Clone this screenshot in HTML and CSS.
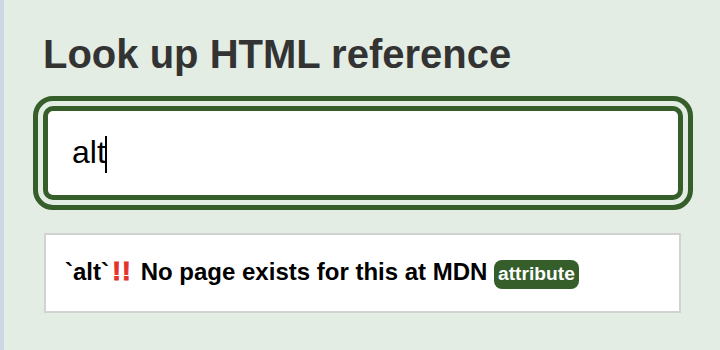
FILE: index.html
```html
<!DOCTYPE html>
<html lang="en">
<head>
<meta charset="utf-8">
<title>Look up HTML reference</title>
<link rel="stylesheet" href="styles.css">
</head>
<body>
  <div class="strip"></div>
  <main class="app">
    <h1 class="title">Look up HTML reference</h1>
    <div class="search" role="textbox" aria-label="Search"><span class="value">alt<span class="caret"></span></span></div>
    <div class="result"><span class="query">`alt`</span><span class="bang">!!</span> No page exists for this at MDN <span class="badge">attribute</span></div>
  </main>
</body>
</html>
```
FILE: styles.css
```css
html, body {
  margin: 0;
  padding: 0;
}
body {
  display: flex;
  min-height: 100vh;
  background: #e3ede4;
  font-family: "Liberation Sans", Arial, sans-serif;
}
.strip {
  width: 4px;
  flex: none;
  background: #cdd7e3;
}
.app {
  flex: 1;
  padding: 31px 0 0 39px;
}
.title {
  margin: 0;
  font-size: 40px;
  font-weight: 700;
  line-height: 46px;
  color: #333333;
}
.search {
  box-sizing: border-box;
  margin-top: 29px;
  width: 640px;
  height: 94px;
  border: 5px solid #355e2b;
  border-radius: 10px;
  outline: 5px solid #355e2b;
  outline-offset: 5px;
  background: #ffffff;
  padding-left: 24px;
  display: flex;
  align-items: center;
  font-size: 32px;
  color: #000000;
}
.caret {
  display: inline-block;
  width: 2px;
  height: 37px;
  margin-left: -1px;
  background: #000000;
  vertical-align: -10px;
}
.result {
  box-sizing: border-box;
  margin-top: 33px;
  margin-left: 1px;
  width: 637px;
  border: 2px solid #d2d2d2;
  background: #ffffff;
  padding: 20px 19px 22px;
  font-size: 24px;
  font-weight: 700;
  line-height: 33px;
  color: #000000;
}
.bang {
  display: inline-block;
  width: 25px;
  text-align: center;
  color: #e3332b;
  font-size: 26px;
  letter-spacing: 1px;
  text-indent: 1px;
  -webkit-text-stroke: 0.9px #e3332b;
}
.badge {
  display: inline-block;
  font-size: 19.2px;
  line-height: 22px;
  padding: 3.5px 4px;
  border-radius: 8px;
  background: #355e2b;
  color: #ffffff;
}
```
